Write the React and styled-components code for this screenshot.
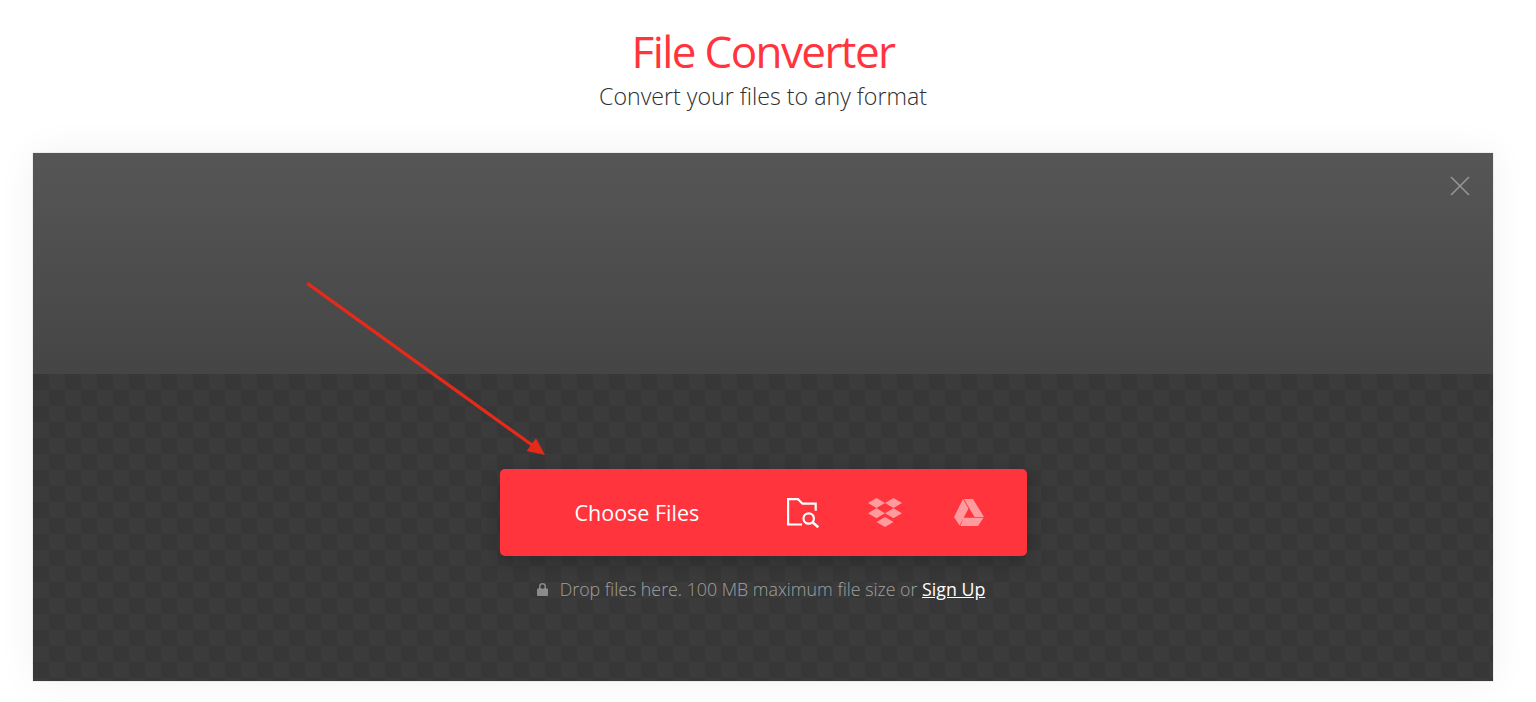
import React from "react";
import styled, { createGlobalStyle } from "styled-components";

const Global = createGlobalStyle`
  html, body { margin: 0; padding: 0; background: #fff; overflow: hidden; }
  body { font-family: "Open Sans", "Liberation Sans", sans-serif; }
`;

const Page = styled.div`
  width: 1536px;
  height: 702px;
  box-sizing: border-box;
  padding: 26px 43px 0 33px;
  display: flex;
  flex-direction: column;
  align-items: center;
`;

const Title = styled.h1`
  margin: 0;
  font-size: 44px;
  line-height: 50px;
  font-weight: 400;
  letter-spacing: -1.6px;
  color: #ff343c;
`;

const Subtitle = styled.p`
  margin: 3px 0 0;
  font-size: 23.2px;
  line-height: 34px;
  font-weight: 300;
  color: #2e2e2e;
`;

const Panel = styled.section`
  position: relative;
  margin-top: 40px;
  width: 1460px;
  height: 528px;
  flex: none;
  display: flex;
  flex-direction: column;
  box-shadow: 0 0 1px rgba(0, 0, 0, 0.3), 0 0 36px rgba(0, 0, 0, 0.06);
`;

const TopBand = styled.div`
  height: 221px;
  flex: none;
  background: linear-gradient(#565656, #454545);
`;

const DropZone = styled.div`
  flex: 1;
  display: flex;
  flex-direction: column;
  align-items: center;
  padding-top: 95px;
  background-color: #3b3b3b;
  background-image: conic-gradient(#3b3b3b 25%, #373737 0 50%, #3b3b3b 0 75%, #373737 0);
  background-size: 32px 32px;
`;

const CloseButton = styled.button`
  position: absolute;
  top: 23px;
  right: 23px;
  width: 20px;
  height: 20px;
  padding: 0;
  border: 0;
  background: none;
  display: block;
`;

const ChooseBar = styled.div`
  width: 527px;
  height: 87px;
  flex: none;
  display: flex;
  align-items: center;
  box-sizing: border-box;
  padding-left: 75px;
  border-radius: 5px;
  background: #ff343c;
  box-shadow: 0 6px 20px rgba(0, 0, 0, 0.22);
`;

const ChooseLabel = styled.span`
  width: 212px;
  flex: none;
  font-size: 21.5px;
  line-height: 30px;
  font-weight: 400;
  color: #fff;
`;

const IconRow = styled.div`
  display: flex;
  align-items: center;
`;

const IconSlot = styled.span`
  display: flex;
  width: ${(p) => p.$w}px;
  opacity: ${(p) => (p.$dim ? 0.5 : 1)};
`;

const Hint = styled.div`
  margin-top: 18px;
  padding-right: 4px;
  display: flex;
  align-items: center;
  gap: 12px;
  font-size: 17.8px;
  line-height: 30px;
  font-weight: 300;
  color: rgba(255, 255, 255, 0.52);
`;

const SignUp = styled.a`
  color: #fff;
  font-weight: 400;
  text-decoration: underline;
`;

const ArrowLayer = styled.svg`
  position: absolute;
  left: 270px;
  top: 125px;
  pointer-events: none;
`;

export default function App() {
  return (
    <Page>
      <Global />
      <Title>File Converter</Title>
      <Subtitle>Convert your files to any format</Subtitle>
      <Panel>
        <TopBand />
        <DropZone>
          <ChooseBar>
            <ChooseLabel>Choose Files</ChooseLabel>
            <IconRow>
              <IconSlot $w={81}>
                <svg width="33" height="31" viewBox="0 0 33 31" fill="none" stroke="#fff" strokeWidth="2.2">
                  <path d="M15 27.500H1.100V2.200H11l4.500 4.500h13.200v7" />
                  <circle cx="21.700" cy="21.500" r="5.200" />
                  <path d="M25.500 25.300l5.800 5" strokeWidth="2.500" />
                </svg>
              </IconSlot>
              <IconSlot $w={84} $dim>
                <svg width="34" height="29" viewBox="0 0 34 29" fill="#fff">
                  <path d="M8.500 0l8.500 5-8.500 5L0 5zM25.500 0L34 5l-8.500 5L17 5zM8.500 10.200l8.500 5-8.500 5-8.500-5zM25.500 10.200l8.500 5-8.500 5-8.500-5zM17 19l8.500 5-8.500 5-8.500-5z" />
                </svg>
              </IconSlot>
              <IconSlot $w={32} $dim>
                <svg width="32" height="28" viewBox="0 0 32 28" fill="#fff">
                  <path d="M11 0L16.500 9.500 7.500 26.500 2 18zM12 0H21L32 18H22.500zM11.500 18.700H31.500L26 27H8.300z" />
                </svg>
              </IconSlot>
            </IconRow>
          </ChooseBar>
          <Hint>
            <svg width="11" height="13" viewBox="0 0 11 13" fill="rgba(255,255,255,0.42)">
              <path d="M1 5.500h9a1 1 0 0 1 1 1V12a1 1 0 0 1-1 1H1a1 1 0 0 1-1-1V6.500a1 1 0 0 1 1-1z" />
              <path d="M2.800 6V3.500a2.700 2.700 0 0 1 5.400 0V6" fill="none" stroke="rgba(255,255,255,0.42)" strokeWidth="1.500" />
            </svg>
            <span>
              Drop files here. 100 MB maximum file size or <SignUp>Sign Up</SignUp>
            </span>
          </Hint>
        </DropZone>
        <CloseButton aria-label="Close">
          <svg width="20" height="20" viewBox="0 0 20 20" stroke="rgba(255,255,255,0.4)" strokeWidth="1.500">
            <path d="M1 1l18 18M19 1L1 19" />
          </svg>
        </CloseButton>
        <ArrowLayer width="250" height="185" viewBox="0 0 250 185">
          <path d="M4.300 5.300L229 167" stroke="#e62a1a" strokeWidth="3.300" fill="none" />
          <path d="M242 177L223.700 173 233 160.300z" fill="#e62a1a" />
        </ArrowLayer>
      </Panel>
    </Page>
  );
}
